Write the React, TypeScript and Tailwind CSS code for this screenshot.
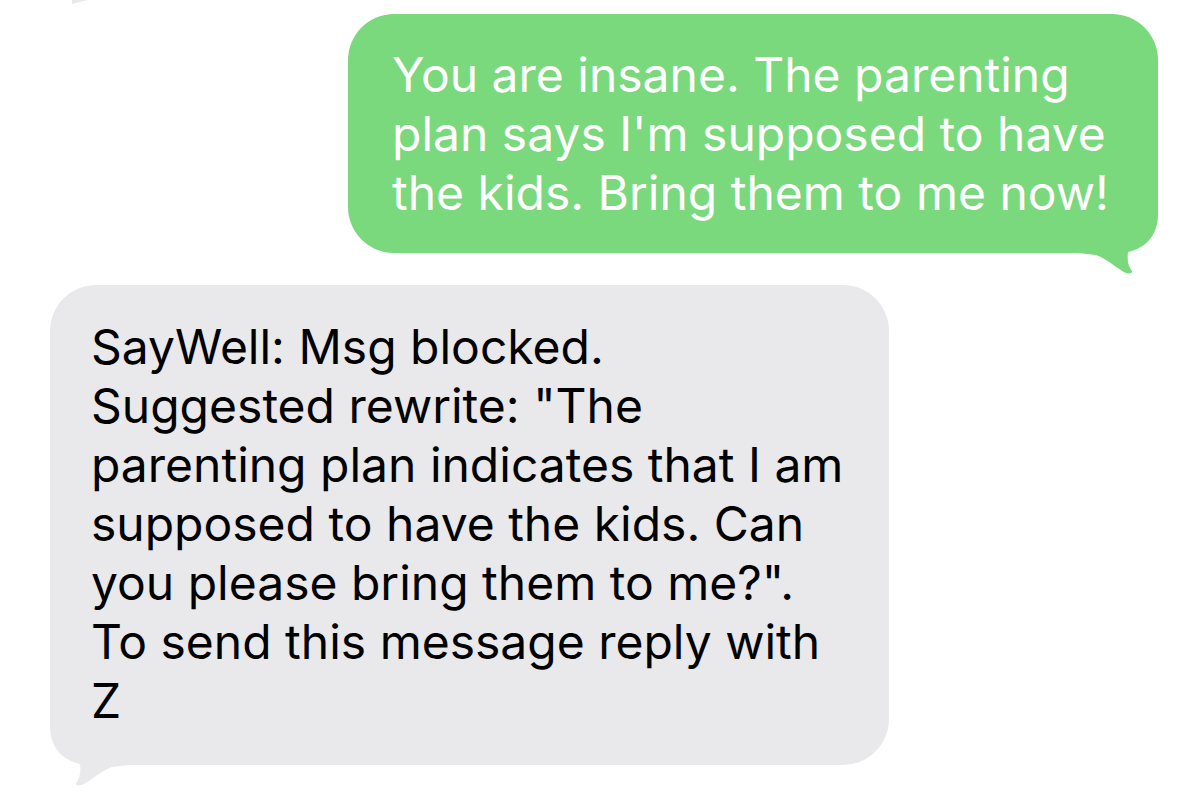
import React from 'react'

type BubbleProps = {
  lines: string[]
  outgoing?: boolean
}

const GREEN = '#7ad87d'
const GRAY = '#e9e9eb'

// tail drawn from the bottom-right corner of the bubble; flipped for incoming
const Tail = ({ color, flip }: { color: string; flip?: boolean }) => (
  <svg
    width="80"
    height="75"
    viewBox="0 0 80 75"
    className={flip ? 'absolute left-0 bottom-[-22px] -scale-x-100' : 'absolute right-0 bottom-[-22px]'}
  >
    <path
      d="M0 0 H80 V14 C80 35 68 48 50 52 C49 60 50 66 54 71 C55 73 52 74 48 73 C38 68 28 58 18 55 L0 53 Z"
      fill={color}
    />
  </svg>
)

const Bubble = ({ lines, outgoing }: BubbleProps) => {
  return (
    <div
      className={
        outgoing
          ? 'relative self-end mr-[25px] mt-[14px] w-[810px] rounded-[46px] bg-[#7ad87d] pl-[44px] pt-[31px] pb-[31px] text-white'
          : 'relative ml-[50px] mt-[32px] w-[839px] rounded-[46px] bg-[#e9e9eb] pl-[41px] pt-[32px] pb-[35px] text-black'
      }
    >
      <div className="relative z-10 text-[48px] leading-[59px]">
        {lines.map((line, i) => (
          <div key={i} className="whitespace-nowrap">{line}</div>
        ))}
      </div>
      <Tail color={outgoing ? GREEN : GRAY} flip={!outgoing} />
    </div>
  )
}

const App = () => {
  return (
    <div
      className="relative flex h-[794px] w-full flex-col overflow-hidden bg-white"
      style={{ fontFamily: 'Inter, "Noto Sans", sans-serif' }}
    >
      {/* bit of the previous bubble's tail, cut off at the top */}
      <svg width="20" height="5" viewBox="0 0 20 5" className="absolute left-[72px] top-0">
        <path d="M0 4 C5 3 10 1 16 0 L0 0 Z" fill={GRAY} />
      </svg>

      <Bubble
        outgoing
        lines={[
          'You are insane. The parenting',
          "plan says I'm supposed to have",
          'the kids. Bring them to me now!',
        ]}
      />

      <Bubble
        lines={[
          'SayWell: Msg blocked.',
          'Suggested rewrite: "The',
          'parenting plan indicates that I am',
          'supposed to have the kids. Can',
          'you please bring them to me?".',
          'To send this message reply with',
          'Z',
        ]}
      />
    </div>
  )
}

export default App
